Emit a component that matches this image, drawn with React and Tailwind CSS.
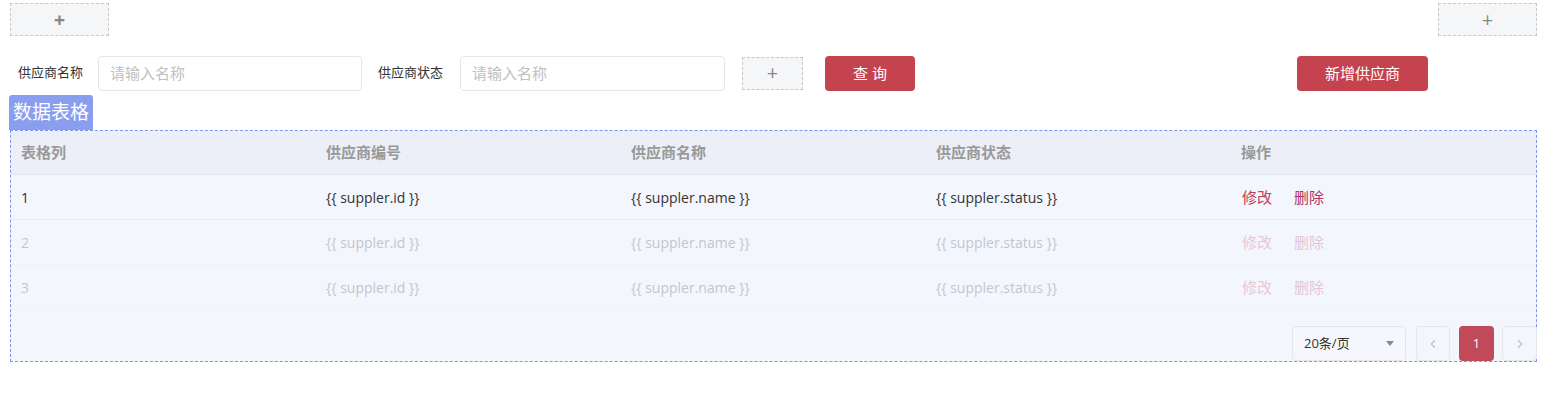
import { ChevronLeft, ChevronRight } from "lucide-react"

const font = { fontFamily: '"Open Sans", "Noto Sans CJK SC", sans-serif' }

function PlusBox({ className = "", bold = false }) {
  return (
    <div
      className={`flex items-center justify-center border border-dashed border-[#c8c8c8] bg-[#f5f6f8] text-[#888] ${className}`}
    >
      <span className={`text-[20px] leading-none ${bold ? "font-bold" : ""}`}>+</span>
    </div>
  )
}

const columns = ["表格列", "供应商编号", "供应商名称", "供应商状态", "操作"]

export default function App() {
  const rows = [1, 2, 3]

  return (
    <div
      className="w-[1558px] h-[403px] bg-white text-[#333] pt-[3px]"
      style={font}
    >
      <div className="flex justify-between pl-[10px] pr-[21px]">
        <PlusBox className="w-[99px] h-[33px]" bold />
        <PlusBox className="w-[99px] h-[33px]" />
      </div>

      <div className="flex items-center h-[34px] mt-[20px] pl-[18px]">
        <span className="text-[13px] w-[80px]">供应商名称</span>
        <div className="w-[264px] h-[35px] border border-[#e4e6ea] rounded-[4px] flex items-center px-[11px] text-[15px] text-[#c0c0c0]">
          请输入名称
        </div>
        <span className="text-[13px] ml-[16px] w-[82px]">供应商状态</span>
        <div className="w-[265px] h-[35px] border border-[#e4e6ea] rounded-[4px] flex items-center px-[11px] text-[15px] text-[#c0c0c0]">
          请输入名称
        </div>
        <PlusBox className="ml-[17px] w-[61px] h-[33px]" />
        <button className="ml-[22px] w-[90px] h-[35px] rounded-[4px] bg-[#c4434f] text-white text-[15px] tracking-[4px] pl-[4px]">
          查询
        </button>
        <button className="ml-[382px] w-[131px] h-[35px] rounded-[4px] bg-[#c4434f] text-white text-[15px]">
          新增供应商
        </button>
      </div>

      <div className="pl-[9px] mt-[5px]">
        <div className="w-[84px] h-[35px] bg-[#8a9ef0] rounded-t-[3px] text-white text-[19px] flex items-center justify-center">
          数据表格
        </div>
      </div>

      <div className="ml-[10px] w-[1527px] border border-dashed border-[#7d92f2] bg-[#f3f6fd]">
        <div className="grid grid-cols-5 h-[44px] bg-[#eceff8] border-b border-[#e2e6ef] items-center">
          {columns.map((c) => (
            <div key={c} className="pl-[10px] text-[15px] font-bold text-[#999]">
              {c}
            </div>
          ))}
        </div>
        {rows.map((r) => (
          <div
            key={r}
            className={`grid grid-cols-5 h-[45px] items-center border-b border-[#e6e9f2] text-[14px] ${r === 1 ? "" : "opacity-25"}`}
          >
            <div className="pl-[10px]">{r}</div>
            <div className="pl-[10px]">{"{{ suppler.id }}"}</div>
            <div className="pl-[10px]">{"{{ suppler.name }}"}</div>
            <div className="pl-[10px]">{"{{ suppler.status }}"}</div>
            <div className="pl-[11px] flex gap-[22px] text-[15px]">
              <span className="text-[#c0415a]">修改</span>
              <span className="text-[#b2355f]">删除</span>
            </div>
          </div>
        ))}
        <div className="flex justify-end items-center pt-[16px] h-[51px] -mr-px">
          <div className="w-[114px] h-[35px] border border-[#e4e6ea] rounded-[4px] flex items-center justify-between px-[11px] text-[13px] bg-[#f5f7fc]">
            <span>20条/页</span>
            <span className="w-0 h-0 border-x-[4px] border-x-transparent border-t-[5px] border-t-[#888]" />
          </div>
          <div className="ml-[10px] w-[34px] h-[35px] border border-[#e4e6ea] rounded-[4px] flex items-center justify-center text-[#c0c0c0]">
            <ChevronLeft size={14} />
          </div>
          <div className="ml-[9px] w-[35px] h-[35px] rounded-[4px] bg-[#c0495a] text-white text-[13px] flex items-center justify-center">
            1
          </div>
          <div className="ml-[8px] w-[35px] h-[35px] border border-[#e4e6ea] rounded-[4px] flex items-center justify-center text-[#c0c0c0]">
            <ChevronRight size={14} />
          </div>
        </div>
      </div>
    </div>
  )
}
